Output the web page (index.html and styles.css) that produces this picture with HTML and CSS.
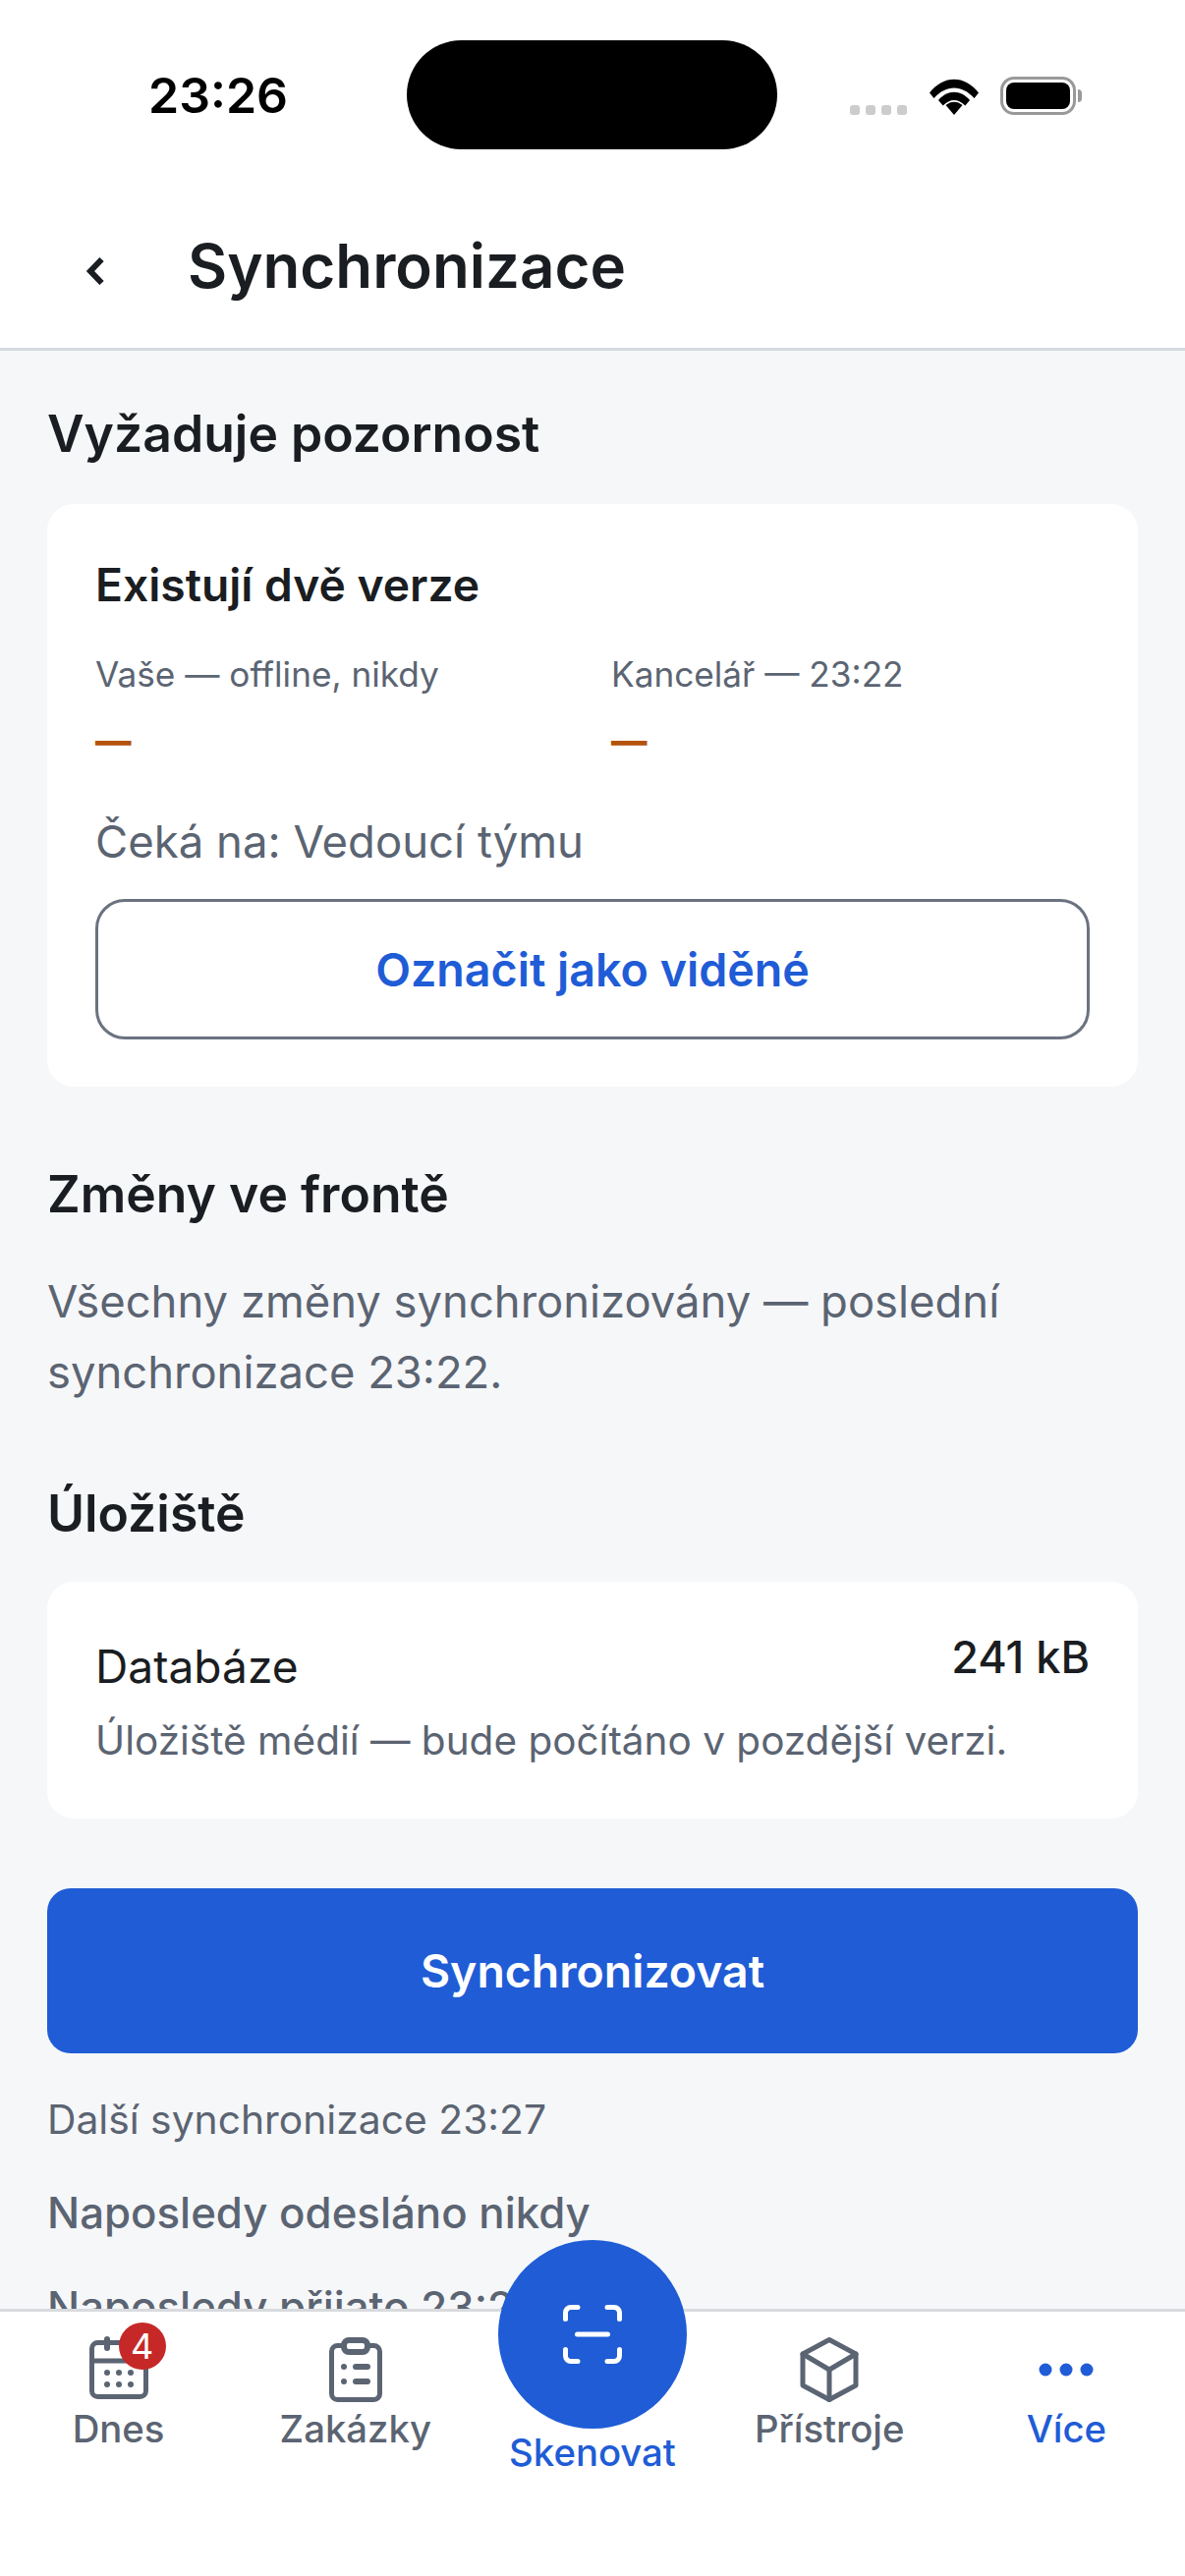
FILE: index.html
```html
<!DOCTYPE html>
<html lang="cs">
<head>
    <meta charset="UTF-8">
    <title>Synchronizace</title>
    <link rel="stylesheet" href="styles.css">
</head>
<body>
    <div id="app">
        <!-- Status bar -->
        <div class="status-bar">
            <span class="status-time">23:26</span>
            <div class="island"></div>
            <div class="status-icons">
                <div class="signal"><i></i><i></i><i></i><i></i></div>
                <svg class="wifi" width="50" height="37" viewBox="0 0 50 37">
                    <path d="M0 14.5 C14 -4 36 -4 50 14.5 L45.5 20 C33 6 17 6 4.5 20 Z"/>
                    <path d="M9 23.5 C18 12.5 32 12.5 41 23.5 L36.3 29 C29.5 21.5 20.5 21.5 13.7 29 Z" transform="translate(0 -1.5)"/>
                    <path d="M16.5 27 C21.5 22.5 28.5 22.5 33.5 27 L25 37 Z"/>
                </svg>
                <div class="battery"><div class="battery-fill"></div></div>
            </div>
        </div>

        <!-- Header -->
        <header class="top-bar">
            <svg class="back" width="20" height="28" viewBox="0 0 20 28">
                <path d="M17.5 2 L6 14 L17.5 26" fill="none" stroke="#1a1d21" stroke-width="6"/>
            </svg>
            <h1 class="title">Synchronizace</h1>
        </header>

        <main class="content">
            <h2 class="section-title first">Vyžaduje pozornost</h2>
            <section class="card conflict">
                <h3 class="card-title">Existují dvě verze</h3>
                <div class="versions">
                    <div class="version">
                        <div class="version-label">Vaše — offline, nikdy</div>
                        <div class="version-value">—</div>
                    </div>
                    <div class="version">
                        <div class="version-label">Kancelář — 23:22</div>
                        <div class="version-value">—</div>
                    </div>
                </div>
                <p class="waiting">Čeká na: Vedoucí týmu</p>
                <button class="btn-outline">Označit jako viděné</button>
            </section>

            <h2 class="section-title queue">Změny ve frontě</h2>
            <p class="queue-text">Všechny změny synchronizovány — poslední synchronizace 23:22.</p>

            <h2 class="section-title storage">Úložiště</h2>
            <section class="card storage-card">
                <div class="storage-row">
                    <span class="storage-name">Databáze</span>
                    <span class="storage-size">241 kB</span>
                </div>
                <p class="storage-note">Úložiště médií — bude počítáno v pozdější verzi.</p>
            </section>

            <button class="btn-primary">Synchronizovat</button>
            <p class="next-sync">Další synchronizace 23:27</p>
            <p class="last-line">Naposledy odesláno nikdy</p>
            <p class="last-line">Naposledy přijato 23:22</p>
        </main>

        <!-- Bottom tabs -->
        <nav class="tabs">
            <div class="tab">
                <div class="tab-icon">
                    <svg width="72" height="72" viewBox="0 0 72 72" fill="none" stroke="#5b6472" stroke-width="5" stroke-linecap="round" stroke-linejoin="round">
                        <rect x="8.5" y="8.5" width="55" height="55" rx="6"/>
                        <path d="M8.5 27 H63.5"/>
                        <path d="M24 5 V14" stroke-width="6"/>
                        <g fill="#5b6472" stroke="none">
                            <circle cx="24" cy="39" r="3"/><circle cx="36" cy="39" r="3"/><circle cx="48" cy="39" r="3"/>
                            <circle cx="24" cy="51" r="3"/><circle cx="36" cy="51" r="3"/><circle cx="48" cy="51" r="3"/>
                        </g>
                    </svg>
                    <span class="badge">4</span>
                </div>
                <span class="tab-label">Dnes</span>
            </div>
            <div class="tab">
                <div class="tab-icon">
                    <svg width="72" height="72" viewBox="0 0 72 72" fill="none" stroke="#5b6472" stroke-width="5" stroke-linecap="round" stroke-linejoin="round">
                        <path d="M24 11.5 H17.5 a6 6 0 0 0 -6 6 V60.5 a6 6 0 0 0 6 6 H54.5 a6 6 0 0 0 6 -6 V17.5 a6 6 0 0 0 -6 -6 H48"/>
                        <rect x="24" y="6" width="24" height="12" rx="5" stroke-width="6"/>
                        <path d="M36 33 H48 M36 48 H48" stroke-width="6"/>
                        <g fill="#5b6472" stroke="none"><circle cx="24" cy="33" r="3"/><circle cx="24" cy="48" r="3"/></g>
                    </svg>
                </div>
                <span class="tab-label">Zakázky</span>
            </div>
            <div class="tab">
                <div class="fab">
                    <svg width="72" height="72" viewBox="0 0 72 72" fill="none" stroke="#fff" stroke-width="5" stroke-linecap="round" stroke-linejoin="round">
                        <path d="M8.5 20.5 V14 a5.5 5.5 0 0 1 5.5 -5.5 H21"/>
                        <path d="M51 8.5 H58 a5.5 5.5 0 0 1 5.5 5.5 V20.5"/>
                        <path d="M8.5 51.5 V58 a5.5 5.5 0 0 0 5.5 5.5 H21"/>
                        <path d="M51 63.5 H58 a5.5 5.5 0 0 0 5.5 -5.5 V51.5"/>
                        <path d="M20.5 36 H51.5"/>
                    </svg>
                </div>
                <span class="tab-label active">Skenovat</span>
            </div>
            <div class="tab">
                <div class="tab-icon">
                    <svg width="72" height="72" viewBox="0 0 72 72" fill="none" stroke="#5b6472" stroke-width="5" stroke-linecap="round" stroke-linejoin="round">
                        <path d="M36 5.5 L63 20 V52 L36 66.5 L9 52 V20 Z"/>
                        <path d="M9 20 L36 36 L63 20"/>
                        <path d="M36 36 V66.5"/>
                    </svg>
                </div>
                <span class="tab-label">Přístroje</span>
            </div>
            <div class="tab">
                <div class="tab-icon">
                    <svg width="72" height="72" viewBox="0 0 72 72" fill="#1f5cd6">
                        <circle cx="15" cy="36" r="6.5"/><circle cx="36" cy="36" r="6.5"/><circle cx="57" cy="36" r="6.5"/>
                    </svg>
                </div>
                <span class="tab-label active">Více</span>
            </div>
        </nav>
    </div>
</body>
</html>
```

FILE: styles.css
```css
* {
    box-sizing: border-box;
}

body {
    margin: 0;
    background-color: #fff;
    font-family: Inter, "Noto Sans", sans-serif;
    color: #1a1d21;
}

h1, h2, h3, p {
    margin: 0;
}

#app {
    display: flex;
    flex-direction: column;
    height: 2622px;
    overflow: hidden;
}

/* Status bar */
.status-bar {
    flex: none;
    height: 200px;
    position: relative;
    display: flex;
    padding: 71px 0 0 151px;
}

.status-time {
    font-size: 50px;
    font-weight: 600;
    line-height: 52px;
    color: #000;
}

.island {
    position: absolute;
    left: 414px;
    top: 41px;
    width: 377px;
    height: 111px;
    border-radius: 56px;
    background-color: #000;
}

.status-icons {
    position: absolute;
    left: 865px;
    top: 78px;
    display: flex;
    align-items: flex-end;
}

.signal {
    display: flex;
    gap: 6px;
    margin-right: 23px;
}

.signal i {
    width: 10px;
    height: 10px;
    border-radius: 3px;
    background-color: #ccc;
}

.wifi {
    margin-right: 22px;
}

.battery {
    position: relative;
    width: 77px;
    height: 39px;
    padding: 3px;
    border: 3px solid #999;
    border-radius: 14px;
}

.battery::after {
    content: "";
    position: absolute;
    right: -9px;
    top: 10px;
    width: 4px;
    height: 13px;
    border-radius: 0 4px 4px 0;
    background-color: #999;
}

.battery-fill {
    height: 100%;
    border-radius: 8px;
    background-color: #000;
}

/* Header */
.top-bar {
    flex: none;
    height: 157px;
    display: flex;
    align-items: center;
    padding: 0 0 12px 86px;
    border-bottom: 3px solid #d5d9e2;
}

.back {
    margin: 10px 85px 0 0;
}

.title {
    font-size: 61.8px;
    font-weight: 600;
    line-height: 80px;
}

/* Content */
.content {
    flex: 1;
    min-height: 0;
    overflow: hidden;
    padding: 0 48px;
    background-color: #f6f7f9;
}

.section-title {
    font-size: 51.7px;
    font-weight: 600;
    line-height: 64px;
}

.section-title.first {
    margin-top: 52px;
}

.card {
    background-color: #fff;
    border-radius: 27px;
    padding: 0 49px;
}

.conflict {
    margin-top: 40px;
    height: 593px;
    padding-top: 50px;
}

.card-title {
    font-size: 46.2px;
    font-weight: 600;
    line-height: 64px;
}

.versions {
    display: grid;
    grid-template-columns: 525px 1fr;
    margin-top: 35px;
}

.version-label {
    font-size: 35.2px;
    line-height: 48px;
    color: #5b6472;
}

.version-value {
    margin-top: 14px;
    font-size: 36.5px;
    font-weight: 800;
    line-height: 60px;
    color: #b45309;
}

.waiting {
    margin-top: 41px;
    font-size: 45.5px;
    line-height: 64px;
    color: #5b6472;
}

.btn-outline {
    display: block;
    width: 100%;
    height: 143px;
    margin-top: 26px;
    background-color: #fff;
    border: 3px solid #6b7280;
    border-radius: 30px;
    font-family: inherit;
    font-size: 46.6px;
    font-weight: 600;
    color: #1f5cd6;
}

.queue {
    margin-top: 77px;
}

.queue-text {
    margin-top: 42px;
    font-size: 45.4px;
    line-height: 72px;
    color: #5b6472;
}

.storage {
    margin-top: 75px;
}

.storage-card {
    margin-top: 38px;
    height: 241px;
    padding-top: 47px;
}

.storage-row {
    display: flex;
    justify-content: space-between;
    align-items: flex-start;
}

.storage-name {
    margin-top: 7px;
    font-size: 46.1px;
    line-height: 64px;
}

.storage-size {
    font-size: 45px;
    font-weight: 500;
    line-height: 60px;
}

.storage-note {
    margin-top: 14px;
    font-size: 40.5px;
    line-height: 60px;
    color: #5b6472;
}

.btn-primary {
    display: block;
    width: 100%;
    height: 168px;
    margin-top: 71px;
    border: none;
    border-radius: 24px;
    background-color: #1f5cd6;
    font-family: inherit;
    font-size: 46.4px;
    font-weight: 600;
    color: #fff;
}

.next-sync {
    margin-top: 37px;
    font-size: 40.8px;
    line-height: 60px;
    color: #5b6472;
}

.last-line {
    margin-top: 36px;
    font-size: 43.8px;
    font-weight: 500;
    line-height: 60px;
    color: #5b6472;
}

/* Bottom tabs */
.tabs {
    flex: none;
    height: 272px;
    display: grid;
    grid-template-columns: repeat(5, 1fr);
    padding-top: 23px;
    background-color: #fff;
    border-top: 3px solid #d8dade;
}

.tab {
    display: flex;
    flex-direction: column;
    align-items: center;
}

.tab-icon {
    position: relative;
    width: 72px;
    height: 72px;
}

.tab-icon svg {
    display: block;
}

.badge {
    position: absolute;
    left: 36px;
    top: -12px;
    width: 48px;
    height: 48px;
    border-radius: 50%;
    background-color: #c62828;
    color: #fff;
    font-size: 36px;
    line-height: 48px;
    text-align: center;
}

.tab-label {
    margin-top: 0;
    font-size: 38.3px;
    font-weight: 500;
    line-height: 48px;
    color: #5b6472;
}

.tab-label.active {
    color: #1f5cd6;
}

.fab {
    position: relative;
    width: 192px;
    height: 192px;
    margin-top: -96px;
    display: flex;
    align-items: center;
    justify-content: center;
    border-radius: 50%;
    background-color: #1f5cd6;
}
```
